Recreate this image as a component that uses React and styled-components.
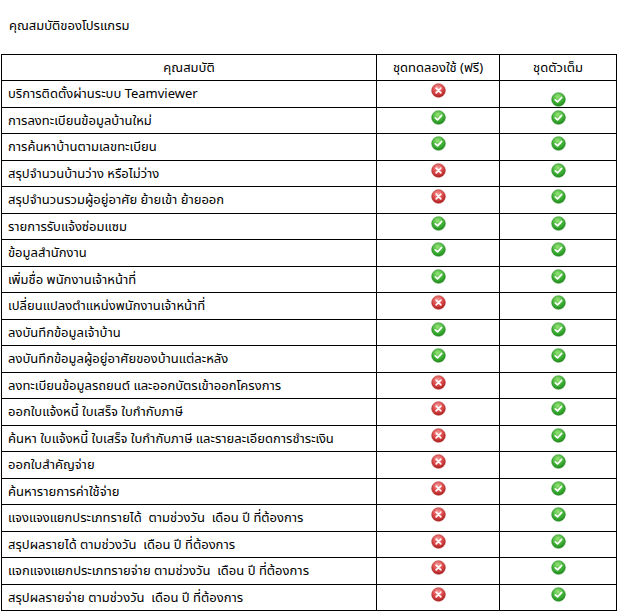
import React from 'react';
import styled, { createGlobalStyle } from 'styled-components';

const GlobalStyle = createGlobalStyle`
  html, body {
    margin: 0;
    padding: 0;
    background: #fff;
  }
  body {
    font-family: Tahoma, "Noto Sans Thai", "Noto Sans", "DejaVu Sans", sans-serif;
    font-size: 13px;
    color: #000;
  }
`;

const Page = styled.div`
  padding: 16px 0 0 1px;
  width: 616px;
`;

const Title = styled.div`
  padding-left: 8px;
  height: 38px;
  line-height: 20px;
`;

const Grid = styled.div`
  display: grid;
  grid-template-columns: 375px 123px 117px;
  border-left: 1px solid #000;
  border-top: 1px solid #000;
  width: 615px;
`;

const Cell = styled.div`
  box-sizing: border-box;
  border-right: 1px solid #000;
  border-bottom: 1px solid #000;
  height: ${({ $h }) => $h}px;
  display: flex;
  align-items: center;
  justify-content: ${({ $center }) => ($center ? 'center' : 'flex-start')};
  padding-left: ${({ $center }) => ($center ? 0 : 6)}px;
  white-space: nowrap;
`;

const IconCell = styled(Cell)`
  align-items: flex-start;
  padding-top: ${({ $drop }) => ($drop ? 11 : 2)}px;
`;

const Icon = ({ ok }) => {
  const id = ok ? 'gOk' : 'gNo';
  return (
    <svg width="15" height="15" viewBox="0 0 16 16">
      <defs>
        <radialGradient id={id} cx="45%" cy="30%" r="70%">
          {ok ? (
            <>
              <stop offset="0%" stopColor="#9be47a" />
              <stop offset="55%" stopColor="#44b53a" />
              <stop offset="100%" stopColor="#1f8a1c" />
            </>
          ) : (
            <>
              <stop offset="0%" stopColor="#f39a9a" />
              <stop offset="55%" stopColor="#dd4a4a" />
              <stop offset="100%" stopColor="#a81e1e" />
            </>
          )}
        </radialGradient>
      </defs>
      <circle cx="8" cy="8" r="7.3" fill={`url(#${id})`} stroke={ok ? '#2a8a24' : '#b02a2a'} strokeWidth="0.6" />
      {ok ? (
        <path d="M4.6 8.3 L7 10.5 L11.4 5.8" fill="none" stroke="#fff" strokeWidth="1.8" strokeLinecap="round" strokeLinejoin="round" />
      ) : (
        <path d="M5.5 5.5 L10.5 10.5 M10.5 5.5 L5.5 10.5" fill="none" stroke="#fff" strokeWidth="1.8" strokeLinecap="round" />
      )}
    </svg>
  );
};

const rows = [
  ['บริการติดตั้งผ่านระบบ Teamviewer', false],
  ['การลงทะเบียนข้อมูลบ้านใหม่', true],
  ['การค้นหาบ้านตามเลขทะเบียน', true],
  ['สรุปจำนวนบ้านว่าง หรือไม่ว่าง', false],
  ['สรุปจำนวนรวมผู้อยู่อาศัย ย้ายเข้า ย้ายออก', false],
  ['รายการรับแจ้งซ่อมแซม', true],
  ['ข้อมูลสำนักงาน', true],
  ['เพิ่มชื่อ พนักงานเจ้าหน้าที่', true],
  ['เปลี่ยนแปลงตำแหน่งพนักงานเจ้าหน้าที่', false],
  ['ลงบันทึกข้อมูลเจ้าบ้าน', true],
  ['ลงบันทึกข้อมูลผู้อยู่อาศัยของบ้านแต่ละหลัง', true],
  ['ลงทะเบียนข้อมูลรถยนต์ และออกบัตรเข้าออกโครงการ', false],
  ['ออกใบแจ้งหนี้ ใบเสร็จ ใบกำกับภาษี', false],
  ['ค้นหา ใบแจ้งหนี้ ใบเสร็จ ใบกำกับภาษี และรายละเอียดการชำระเงิน', false],
  ['ออกใบสำคัญจ่าย', false],
  ['ค้นหารายการค่าใช้จ่าย', false],
  ['แจงแจงแยกประเภทรายได้  ตามช่วงวัน  เดือน ปี ที่ต้องการ', false],
  ['สรุปผลรายได้ ตามช่วงวัน  เดือน ปี ที่ต้องการ', false],
  ['แจกแจงแยกประเภทรายจ่าย ตามช่วงวัน  เดือน ปี ที่ต้องการ', false],
  ['สรุปผลรายจ่าย ตามช่วงวัน  เดือน ปี ที่ต้องการ', false],
];

export default function App() {
  return (
    <Page>
      <GlobalStyle />
      <Title>คุณสมบัติของโปรแกรม</Title>
      <Grid>
        <Cell $h={26} $center>คุณสมบัติ</Cell>
        <Cell $h={26} $center>ชุดทดลองใช้ (ฟรี)</Cell>
        <Cell $h={26} $center>ชุดตัวเต็ม</Cell>
        {rows.map(([label, trial], i) => {
          const h = i % 2 === 0 ? 27 : 26;
          return (
            <React.Fragment key={i}>
              <Cell $h={h}>{label.replace(/  /g, '\u00a0 ')}</Cell>
              <IconCell $h={h} $center><Icon ok={trial} /></IconCell>
              <IconCell $h={h} $center $drop={i === 0}><Icon ok /></IconCell>
            </React.Fragment>
          );
        })}
      </Grid>
    </Page>
  );
}
